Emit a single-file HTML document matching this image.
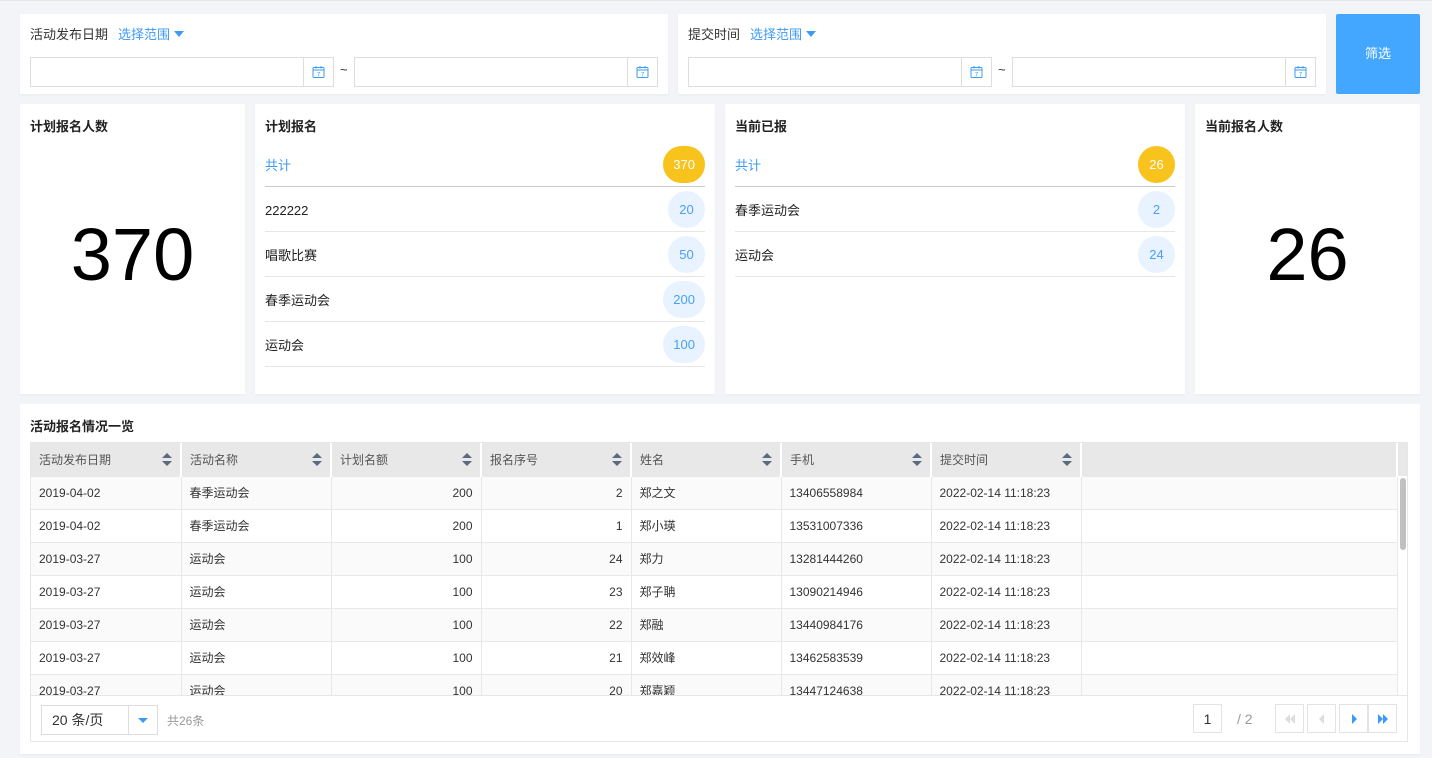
<!DOCTYPE html>
<html><head><meta charset="utf-8"><style>
*{box-sizing:border-box;margin:0;padding:0}
body{width:1432px;height:758px;background:#f3f4f8;font-family:"Liberation Sans","Noto Sans CJK SC",sans-serif;font-size:13px;color:#333;position:relative;overflow:hidden;border-top:1px solid #e6e6ea}
.a{position:absolute}
.card{position:absolute;background:#fff;box-shadow:0 1px 2px rgba(0,0,0,.04)}
.lbl{position:absolute;top:10px;font-size:13px;color:#333}
.lbl b{font-weight:normal;color:#3d9bf5;margin-left:10px}
.lbl i{display:inline-block;width:0;height:0;border-left:5px solid transparent;border-right:5px solid transparent;border-top:6px solid #3d9bf5;margin-left:4px;vertical-align:2px}
.inp{position:absolute;top:43px;height:30px;width:304px;border:1px solid #ddd;background:#fff}
.inp .ic{position:absolute;right:0;top:0;width:30px;height:28px;border-left:1px solid #ddd;display:flex;align-items:center;justify-content:center}
.tl{position:absolute;top:48px;font-size:13px}
.title{position:absolute;left:10px;top:12px;font-weight:bold;font-size:13px;color:#222}
.big{position:absolute;left:0;right:0;top:106px;text-align:center;font-size:74px;color:#000;line-height:90px}
.li{position:absolute;left:10px;right:10px;height:45px;border-bottom:1px solid #e6e6e6;font-size:13px;line-height:48px;color:#222}
.li.tot{color:#3d9bf5;border-bottom:1px solid #c8c8d0}
.pill{position:absolute;right:0;top:4px;height:37px;min-width:37px;padding:0 10px;border-radius:19px;background:#e8f3ff;color:#4aa0f5;text-align:center;line-height:37px;font-size:13px}
.tot .pill{background:#f8c31c;color:#fff}
table{border-collapse:collapse;table-layout:fixed;font-size:12px;color:#333}
td,th{height:33px;border-right:1px solid #e8e8e8;border-bottom:1px solid #e8e8e8;padding:0 8px;white-space:nowrap;overflow:hidden;font-weight:normal;text-align:left}
th{background:#e8e8e8;color:#555;border-right:2px solid #fff;position:relative}
th .s{position:absolute;right:8px;top:10px}
tr:nth-child(even) td{background:#fafafa}
.r{text-align:right}
.pb{position:absolute;top:8px;width:29px;height:29px;border:1px solid #e3e3e3;background:#fff;display:flex;align-items:center;justify-content:center}
</style></head><body>
<svg width="0" height="0" style="position:absolute"><defs>
<g id="cal"><rect x="1" y="2.5" width="11" height="10" rx="1" fill="none" stroke="#3d9bf5" stroke-width="1"/><line x1="1" y1="5" x2="12" y2="5" stroke="#3d9bf5"/><line x1="4" y1="1" x2="4" y2="3.5" stroke="#3d9bf5"/><line x1="9" y1="1" x2="9" y2="3.5" stroke="#3d9bf5"/><text x="6.5" y="11.5" font-size="6" text-anchor="middle" fill="#3d9bf5" font-family="Liberation Sans">7</text></g>
<g id="srt"><path d="M0 5 L5 0 L10 5Z M0 8 L10 8 L5 13Z" fill="#5a6a80"/></g>
</defs></svg>

<div class="card" style="left:20px;top:13px;width:648px;height:80px">
 <div class="lbl" style="left:10px">活动发布日期<b>选择范围</b><i></i></div>
 <div class="inp" style="left:10px"><div class="ic"><svg width="13" height="14"><use href="#cal"/></svg></div></div>
 <div class="tl" style="left:320px">~</div>
 <div class="inp" style="left:334px"><div class="ic"><svg width="13" height="14"><use href="#cal"/></svg></div></div>
</div>
<div class="card" style="left:678px;top:13px;width:648px;height:80px">
 <div class="lbl" style="left:10px">提交时间<b>选择范围</b><i></i></div>
 <div class="inp" style="left:10px"><div class="ic"><svg width="13" height="14"><use href="#cal"/></svg></div></div>
 <div class="tl" style="left:320px">~</div>
 <div class="inp" style="left:334px"><div class="ic"><svg width="13" height="14"><use href="#cal"/></svg></div></div>
</div>
<div class="a" style="left:1336px;top:13px;width:84px;height:80px;background:#44a7ff;border-radius:2px;color:#fff;text-align:center;line-height:80px;font-size:13px">筛选</div>

<div class="card" style="left:20px;top:103px;width:225px;height:290px"><div class="title">计划报名人数</div><div class="big">370</div></div>
<div class="card" style="left:255px;top:103px;width:460px;height:290px"><div class="title">计划报名</div>
 <div class="li tot" style="top:38px">共计<span class="pill">370</span></div>
 <div class="li" style="top:83px">222222<span class="pill">20</span></div>
 <div class="li" style="top:128px">唱歌比赛<span class="pill">50</span></div>
 <div class="li" style="top:173px">春季运动会<span class="pill">200</span></div>
 <div class="li" style="top:218px">运动会<span class="pill">100</span></div>
</div>
<div class="card" style="left:725px;top:103px;width:460px;height:290px"><div class="title">当前已报</div>
 <div class="li tot" style="top:38px">共计<span class="pill">26</span></div>
 <div class="li" style="top:83px">春季运动会<span class="pill">2</span></div>
 <div class="li" style="top:128px">运动会<span class="pill">24</span></div>
</div>
<div class="card" style="left:1195px;top:103px;width:225px;height:290px"><div class="title">当前报名人数</div><div class="big">26</div></div>

<div class="card" style="left:20px;top:403px;width:1400px;height:350px">
 <div class="title">活动报名情况一览</div>
 <div class="a" style="left:10px;top:38px;width:1378px;height:300px;border:1px solid #e6e6e6;overflow:hidden">
  <div class="a" style="left:0;top:0;width:1367px;height:252px;overflow:hidden">
  <table style="width:1367px">
   <colgroup><col style="width:150px"><col style="width:150px"><col style="width:150px"><col style="width:150px"><col style="width:150px"><col style="width:150px"><col style="width:150px"><col></colgroup>
   <tr><th>活动发布日期<svg class="s" width="10" height="13"><use href="#srt"/></svg></th><th>活动名称<svg class="s" width="10" height="13"><use href="#srt"/></svg></th><th>计划名额<svg class="s" width="10" height="13"><use href="#srt"/></svg></th><th>报名序号<svg class="s" width="10" height="13"><use href="#srt"/></svg></th><th>姓名<svg class="s" width="10" height="13"><use href="#srt"/></svg></th><th>手机<svg class="s" width="10" height="13"><use href="#srt"/></svg></th><th>提交时间<svg class="s" width="10" height="13"><use href="#srt"/></svg></th><th></th></tr>
   <tr><td>2019-04-02</td><td>春季运动会</td><td class="r">200</td><td class="r">2</td><td>郑之文</td><td>13406558984</td><td>2022-02-14 11:18:23</td><td></td></tr>
   <tr><td>2019-04-02</td><td>春季运动会</td><td class="r">200</td><td class="r">1</td><td>郑小瑛</td><td>13531007336</td><td>2022-02-14 11:18:23</td><td></td></tr>
   <tr><td>2019-03-27</td><td>运动会</td><td class="r">100</td><td class="r">24</td><td>郑力</td><td>13281444260</td><td>2022-02-14 11:18:23</td><td></td></tr>
   <tr><td>2019-03-27</td><td>运动会</td><td class="r">100</td><td class="r">23</td><td>郑子聃</td><td>13090214946</td><td>2022-02-14 11:18:23</td><td></td></tr>
   <tr><td>2019-03-27</td><td>运动会</td><td class="r">100</td><td class="r">22</td><td>郑融</td><td>13440984176</td><td>2022-02-14 11:18:23</td><td></td></tr>
   <tr><td>2019-03-27</td><td>运动会</td><td class="r">100</td><td class="r">21</td><td>郑效峰</td><td>13462583539</td><td>2022-02-14 11:18:23</td><td></td></tr>
   <tr><td>2019-03-27</td><td>运动会</td><td class="r">100</td><td class="r">20</td><td>郑嘉颖</td><td>13447124638</td><td>2022-02-14 11:18:23</td><td></td></tr>
  </table>
  </div>
  <div class="a" style="left:1367px;top:0;width:11px;height:33px;background:#e8e8e8"></div>
  <div class="a" style="left:1369px;top:35px;width:6px;height:72px;background:#c1c1c1;border-radius:3px"></div>
  <div class="a" style="left:0;top:252px;width:1378px;height:47px;border-top:1px solid #e6e6e6;background:#fff">
   <div class="a" style="left:10px;top:9px;width:117px;height:30px;border:1px solid #ddd;font-size:14px;line-height:28px;padding-left:10px;color:#333">20 条/页<div class="a" style="left:86px;top:0;width:29px;height:28px;border-left:1px solid #ddd"><div class="a" style="left:9px;top:12px;border-left:5px solid transparent;border-right:5px solid transparent;border-top:5px solid #3d9bf5"></div></div></div>
   <div class="a" style="left:136px;top:16px;font-size:12px;color:#999">共26条</div>
   <div class="pb" style="left:1162px;font-size:14px;color:#333">1</div>
   <div class="a" style="left:1206px;top:15px;font-size:14px;color:#999">/ 2</div>
   <div class="pb" style="left:1244px"><svg width="12" height="10"><path d="M6 0V10L1 5Z M11 0V10L6 5Z" fill="#ddd"/></svg></div>
   <div class="pb" style="left:1276px"><svg width="8" height="10"><path d="M6 0V10L1 5Z" fill="#ddd"/></svg></div>
   <div class="pb" style="left:1308px"><svg width="8" height="10"><path d="M2 0V10L7 5Z" fill="#3d9bf5"/></svg></div>
   <div class="pb" style="left:1337px"><svg width="12" height="10"><path d="M1 0V10L6 5Z M6 0V10L11 5Z" fill="#3d9bf5"/></svg></div>
  </div>
 </div>
</div>
</body></html>
